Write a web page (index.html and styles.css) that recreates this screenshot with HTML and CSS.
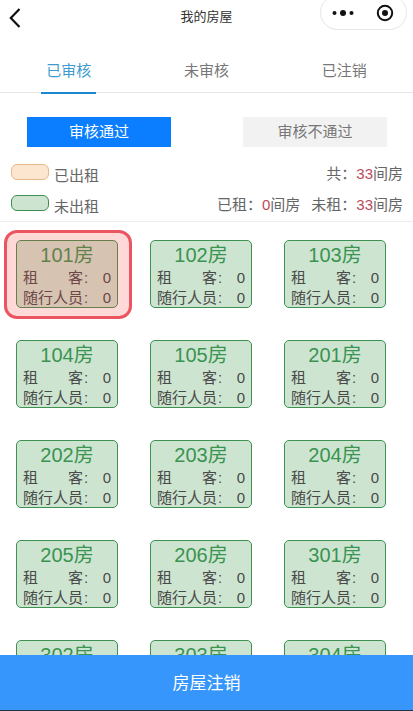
FILE: index.html
```html
<!DOCTYPE html>
<html lang="zh">
<head>
<meta charset="utf-8">
<title>我的房屋</title>
<link rel="stylesheet" href="styles.css">
</head>
<body>
<div class="page">
  <header class="nav">
    <svg class="back" viewBox="0 0 14 22" width="14" height="22"><path d="M11.5 2 2.8 11l8.7 9" fill="none" stroke="#111" stroke-width="2.2"/></svg>
    <span class="nav-title">我的房屋</span>
    <div class="capsule">
      <svg class="dots" viewBox="0 0 24 8" width="24" height="8"><circle cx="3.5" cy="4" r="2" fill="#111"/><circle cx="12" cy="4" r="3" fill="#111"/><circle cx="20.5" cy="4" r="2" fill="#111"/></svg>
      <svg class="target" viewBox="0 0 18 18" width="18" height="18"><circle cx="9" cy="9" r="7.2" fill="none" stroke="#111" stroke-width="2"/><circle cx="9" cy="9" r="3" fill="#111"/></svg>
    </div>
  </header>
  <nav class="tabs">
    <div class="tab active"><span>已审核</span></div>
    <div class="tab"><span>未审核</span></div>
    <div class="tab"><span>已注销</span></div>
  </nav>
  <div class="switch">
    <div class="sw sw-on">审核通过</div>
    <div class="sw sw-off">审核不通过</div>
  </div>
  <div class="legend">
    <div class="legend-row">
      <div class="key"><i class="swatch swatch-rented"></i><span>已出租</span></div>
      <div class="stat">共：<b>33</b>间房</div>
    </div>
    <div class="legend-row">
      <div class="key"><i class="swatch swatch-free"></i><span>未出租</span></div>
      <div class="stat">已租：<b>0</b>间房<i class="gap"></i>未租：<b>33</b>间房</div>
    </div>
  </div>
  <main class="rooms">
    <div class="grid">
      <div class="room selected"><h3>101房</h3><p><span class="lbl">租<em>客</em></span><span class="sep">:</span><span>0</span></p><p><span class="lbl">随行人员</span><span class="sep">:</span><span>0</span></p></div>
      <div class="room"><h3>102房</h3><p><span class="lbl">租<em>客</em></span><span class="sep">:</span><span>0</span></p><p><span class="lbl">随行人员</span><span class="sep">:</span><span>0</span></p></div>
      <div class="room"><h3>103房</h3><p><span class="lbl">租<em>客</em></span><span class="sep">:</span><span>0</span></p><p><span class="lbl">随行人员</span><span class="sep">:</span><span>0</span></p></div>
      <div class="room"><h3>104房</h3><p><span class="lbl">租<em>客</em></span><span class="sep">:</span><span>0</span></p><p><span class="lbl">随行人员</span><span class="sep">:</span><span>0</span></p></div>
      <div class="room"><h3>105房</h3><p><span class="lbl">租<em>客</em></span><span class="sep">:</span><span>0</span></p><p><span class="lbl">随行人员</span><span class="sep">:</span><span>0</span></p></div>
      <div class="room"><h3>201房</h3><p><span class="lbl">租<em>客</em></span><span class="sep">:</span><span>0</span></p><p><span class="lbl">随行人员</span><span class="sep">:</span><span>0</span></p></div>
      <div class="room"><h3>202房</h3><p><span class="lbl">租<em>客</em></span><span class="sep">:</span><span>0</span></p><p><span class="lbl">随行人员</span><span class="sep">:</span><span>0</span></p></div>
      <div class="room"><h3>203房</h3><p><span class="lbl">租<em>客</em></span><span class="sep">:</span><span>0</span></p><p><span class="lbl">随行人员</span><span class="sep">:</span><span>0</span></p></div>
      <div class="room"><h3>204房</h3><p><span class="lbl">租<em>客</em></span><span class="sep">:</span><span>0</span></p><p><span class="lbl">随行人员</span><span class="sep">:</span><span>0</span></p></div>
      <div class="room"><h3>205房</h3><p><span class="lbl">租<em>客</em></span><span class="sep">:</span><span>0</span></p><p><span class="lbl">随行人员</span><span class="sep">:</span><span>0</span></p></div>
      <div class="room"><h3>206房</h3><p><span class="lbl">租<em>客</em></span><span class="sep">:</span><span>0</span></p><p><span class="lbl">随行人员</span><span class="sep">:</span><span>0</span></p></div>
      <div class="room"><h3>301房</h3><p><span class="lbl">租<em>客</em></span><span class="sep">:</span><span>0</span></p><p><span class="lbl">随行人员</span><span class="sep">:</span><span>0</span></p></div>
      <div class="room"><h3>302房</h3><p><span class="lbl">租<em>客</em></span><span class="sep">:</span><span>0</span></p><p><span class="lbl">随行人员</span><span class="sep">:</span><span>0</span></p></div>
      <div class="room"><h3>303房</h3><p><span class="lbl">租<em>客</em></span><span class="sep">:</span><span>0</span></p><p><span class="lbl">随行人员</span><span class="sep">:</span><span>0</span></p></div>
      <div class="room"><h3>304房</h3><p><span class="lbl">租<em>客</em></span><span class="sep">:</span><span>0</span></p><p><span class="lbl">随行人员</span><span class="sep">:</span><span>0</span></p></div>
    </div>
  </main>
  <footer class="foot">房屋注销</footer>
</div>
</body>
</html>
```
FILE: styles.css
```css
* { box-sizing: border-box; margin: 0; padding: 0; }
html, body { height: 100%; overflow: hidden; background: #fff; }
body { font-family: "Liberation Sans", "Noto Sans CJK SC", sans-serif; color: #666; }
.page { height: 711px; display: flex; flex-direction: column; }

.nav { height: 34px; position: relative; flex: none; display: flex; align-items: center; justify-content: center; }
.back { position: absolute; left: 8px; top: 7px; }
.nav-title { font-size: 13px; line-height: 33px; height: 34px; color: #333; }
.capsule { position: absolute; left: 320px; top: -5px; width: 87px; height: 35px; border: 1px solid #e6e6e6; border-radius: 18px; background: #fff; display: flex; align-items: center; padding-left: 10px; }
.dots { flex: none; }
.target { flex: none; margin-left: 21px; }

.tabs { height: 59px; flex: none; display: flex; border-bottom: 1px solid #e6e6e6; }
.tab { flex: 1; display: flex; justify-content: center; }
.tab span { display: block; width: 55px; height: 60px; padding-top: 27px; text-align: center; font-size: 15px; line-height: 20px; color: #777; }
.tab.active span { color: #3d9bd0; border-bottom: 2px solid #1a87d0; }

.switch { flex: none; display: flex; justify-content: space-between; padding: 24px 26px 0 27px; }
.sw { width: 144px; height: 30px; line-height: 30px; text-align: center; font-size: 15px; }
.sw-on { background: #0a7eff; color: #fff; }
.sw-off { background: #f2f2f2; color: #777; }

.legend { flex: none; padding: 0 10px 0 11px; margin-top: 17px; height: 57px; }
.legend-row { height: 31px; display: flex; justify-content: space-between; align-items: flex-start; font-size: 15px; line-height: 20px; }
.key { display: flex; align-items: flex-start; }
.swatch { display: block; width: 38px; height: 16px; border-radius: 6px; margin-right: 5px; }
.swatch-rented { background: #fde6cf; border: 1px solid #e8b98a; }
.swatch-free { background: #cde5d0; border: 1px solid #3f8f52; }
.key span { margin-top: 2px; }
.stat b { font-weight: normal; color: #b94a5c; }
.gap { display: inline-block; width: 11px; }

.rooms { flex: 1; min-height: 0; overflow: hidden; border-top: 1px solid #ececec; padding: 18px 0 0 16px; }
.grid { display: grid; grid-template-columns: repeat(3, 102px); grid-auto-rows: 68px; gap: 32px; }
.room { position: relative; border: 1px solid #3f9152; border-radius: 5px; background: #cde5d0; padding: 0 6px; }
.room h3 { font-weight: normal; font-size: 20px; line-height: 28px; height: 27px; text-align: center; color: #3a9350; }
.room p { display: flex; font-size: 15px; line-height: 20px; height: 20px; color: #4a4a4a; }
.lbl { width: 60px; display: flex; justify-content: space-between; }
.lbl em { font-style: normal; }
.sep { width: 5px; margin-left: 1px; }
.room p span:last-child { margin-left: auto; }
.selected::after { content: ""; box-sizing: border-box; position: absolute; left: -13px; top: -11px; width: 128px; height: 89px; border: 3px solid #ea5561; border-radius: 13px; background: rgba(255, 60, 60, .2); }

.foot { flex: none; height: 56px; background: #3796fb; color: #fff; font-size: 17px; text-align: center; line-height: 57px; border-bottom: 1px solid #234; }
```
